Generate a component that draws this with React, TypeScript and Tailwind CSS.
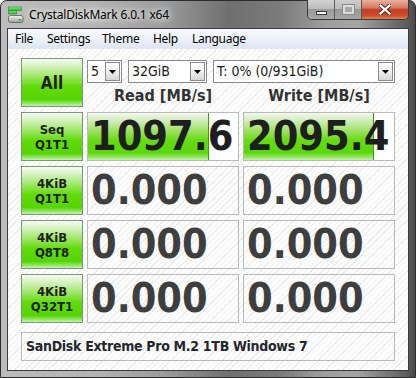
import React from "react";

const hatch =
  "bg-[repeating-linear-gradient(135deg,#ffffff_0px,#ffffff_3px,#ececec_3px,#ececec_4px)]";
const tahoma = "font-['DejaVu_Sans_Condensed','DejaVu_Sans',sans-serif]";
const segoe = "font-['Noto_Sans','Open_Sans',sans-serif]";
const greenBtn =
  "border border-[#7e957e] bg-[linear-gradient(180deg,#f6fcf2_0%,#d4f1be_16%,#97e65a_40%,#62db0c_58%,#54d500_86%,#98e86c_95%,#c8f2b0_100%)]";
const greenBar =
  "bg-[linear-gradient(180deg,#f2f9ee_0%,#cdecb6_18%,#92e050_42%,#66db14_58%,#5ad80a_84%,#95e862_94%,#c4f2a8_100%)]";

function GreenBtn({ l1, l2 }: { l1: string; l2?: string }) {
  return (
    <div
      className={`${greenBtn} h-[49px] flex flex-col items-center justify-center text-[#1f1f1f] font-bold ${tahoma} ${
        l2 ? "text-[13px] leading-[15px]" : "text-[17px] leading-[20px]"
      }`}
    >
      <span>{l1}</span>
      {l2 && <span>{l2}</span>}
    </div>
  );
}

function Combo({ w, text }: { w: string; text: string }) {
  return (
    <div
      className={`${w} h-[23px] border border-[#8a8a8a] bg-white flex items-stretch ${tahoma} text-[14px] text-[#1a1a1a]`}
    >
      <div className="flex-1 flex items-center pl-[3px] overflow-hidden whitespace-nowrap">
        {text}
      </div>
      <div className="my-[1px] mr-[1px] w-[15px] border border-[#8c8c8c] bg-[linear-gradient(180deg,#ffffff_0%,#f0f0f0_50%,#d6d6d6_100%)] flex items-center justify-center">
        <svg width="7" height="4" viewBox="0 0 7 4">
          <path d="M0 0 H7 L3.5 4 Z" fill="#000" />
        </svg>
      </div>
    </div>
  );
}

function Cell({
  value,
  bar,
}: {
  value: string;
  bar?: string;
}) {
  return (
    <div
      className={`relative h-[49px] border border-[#bababa] ${
        bar ? "bg-white" : ""
      } overflow-hidden`}
    >
      {bar && (
        <div
          className={`absolute left-0 top-0 bottom-0 ${greenBar} border-r border-r-[#3c9a1c] ${bar}`}
        />
      )}
      <div
        className={`relative h-full flex items-center pl-[3px] ${tahoma} font-bold text-[41px] leading-none tracking-[0px] ${
          bar ? "text-[#1e1e1e]" : "text-[#3e3e3e]"
        }`}
      >
        {value}
      </div>
    </div>
  );
}

export default function App() {
  return (
    <div className="w-[416px] h-[378px] bg-white overflow-hidden">
      <div className="w-[416px] h-[378px] rounded-t-[7px] border border-[#2c2c2c] bg-[linear-gradient(90deg,#bcbcbc_0%,#b4b4b4_22%,#9a9a9a_40%,#6f6f6f_55%,#7c7c7c_68%,#9e9e9e_78%,#a4a4a4_86%,#5c5c5c_98%,#4a4a4a_100%)] flex flex-col">
        {/* title bar */}
        <div className="h-[27px] flex items-start shrink-0">
          <div className="ml-[7px] mt-[5px]">
            <svg width="16" height="18" viewBox="0 0 16 18">
              <defs>
                <linearGradient id="g1" x1="0" y1="0" x2="0" y2="1">
                  <stop offset="0" stopColor="#8ff08f" />
                  <stop offset="1" stopColor="#21b521" />
                </linearGradient>
                <linearGradient id="g2" x1="0" y1="0" x2="0" y2="1">
                  <stop offset="0" stopColor="#f4f4f4" />
                  <stop offset="1" stopColor="#9c9c9c" />
                </linearGradient>
              </defs>
              <rect x="0.5" y="1" width="13" height="3.5" fill="url(#g1)" stroke="#2a8a2a" strokeWidth="0.6" />
              <rect x="0.5" y="5" width="8" height="3" fill="url(#g1)" stroke="#2a8a2a" strokeWidth="0.6" />
              <rect x="0.5" y="9.5" width="14.5" height="7" rx="2" fill="url(#g2)" stroke="#5c5c5c" strokeWidth="0.8" />
              <rect x="10.5" y="13" width="3" height="1.6" fill="#2ec42e" />
            </svg>
          </div>
          <div
            className={`ml-[5px] mt-[6px] ${segoe} text-[12px] leading-[16px] text-black tracking-[-0.2px] [text-shadow:0_0_6px_#ffffff,0_0_10px_#ffffff]`}
          >
            CrystalDiskMark 6.0.1 x64
          </div>
          <div className="ml-auto mr-[6px] -mt-[1px] flex h-[20px] rounded-b-[5px] border border-t-0 border-[#3a3a3a] overflow-hidden">
            <div className="w-[27px] h-full border-r border-[#5a5a5a] bg-[linear-gradient(180deg,#d2d2d2_0%,#bdbdbd_45%,#9a9a9a_50%,#a8a8a8_100%)] flex items-center justify-center">
              <div className="mt-[6px] w-[11px] h-[4px] bg-white border border-[#3a3a3a]" />
            </div>
            <div className="w-[27px] h-full border-r border-[#5a5a5a] bg-[linear-gradient(180deg,#cfcfcf_0%,#bababa_45%,#989898_50%,#a6a6a6_100%)] flex items-center justify-center">
              <div className="w-[11px] h-[9px] border-[2px] border-[#dcdcdc] bg-[#a8a8a8] outline outline-1 outline-[#8a8a8a]" />
            </div>
            <div className="w-[46px] h-full bg-[linear-gradient(180deg,#eab0a0_0%,#d67a62_40%,#c43c22_52%,#cc4a2c_80%,#e08050_100%)] flex items-center justify-center">
              <svg width="12" height="11" viewBox="0 0 12 11">
                <path d="M1.5 1.5 L10.5 9.5 M10.5 1.5 L1.5 9.5" stroke="#3a2a2a" strokeWidth="4" strokeLinecap="square" />
                <path d="M1.5 1.5 L10.5 9.5 M10.5 1.5 L1.5 9.5" stroke="#ffffff" strokeWidth="2.2" strokeLinecap="square" />
              </svg>
            </div>
          </div>
        </div>

        {/* client */}
        <div className="mx-[6px] mb-[6px] flex-1 border border-[#3c3c3c] flex flex-col bg-white">
          {/* menu */}
          <div
            className={`h-[20px] shrink-0 flex items-center ${segoe} text-[12px] text-black bg-[linear-gradient(180deg,#f7f9fd_0%,#eef2f9_50%,#dfe6f1_100%)] border-b border-[#e2e8f2]`}
          >
            <span className="w-[33px] pl-[7px] tracking-[-0.3px]">File</span>
            <span className="w-[55px] pl-[6px] tracking-[-0.3px]">Settings</span>
            <span className="w-[51px] pl-[6px] tracking-[-0.3px]">Theme</span>
            <span className="w-[39px] pl-[6px] tracking-[-0.3px]">Help</span>
            <span className="pl-[6px] tracking-[-0.3px]">Language</span>
          </div>

          {/* content */}
          <div className={`flex-1 ${hatch} px-[13px] pt-[9px] pb-[8px] flex flex-col`}>
            <div className="grid grid-cols-[62px_152px_152px] gap-x-[4px] gap-y-[5px]">
              <GreenBtn l1="All" />
              <div className="col-span-2 flex flex-col">
                <div className="mt-[2px] flex gap-[6px]">
                  <Combo w="w-[35px]" text="5" />
                  <Combo w="w-[79px]" text="32GiB" />
                  <Combo w="w-[182px]" text="T: 0% (0/931GiB)" />
                </div>
                <div
                  className={`flex-1 grid grid-cols-[152px_152px] gap-x-[4px] ${tahoma} font-bold text-[16px] text-[#333333] items-end pb-[1px]`}
                >
                  <div className="text-center leading-[20px]">Read [MB/s]</div>
                  <div className="text-center leading-[20px]">Write [MB/s]</div>
                </div>
              </div>

              <GreenBtn l1="Seq" l2="Q1T1" />
              <Cell value="1097.6" bar="w-[121px]" />
              <Cell value="2095.4" bar="w-[130px]" />

              <GreenBtn l1="4KiB" l2="Q1T1" />
              <Cell value="0.000" />
              <Cell value="0.000" />

              <GreenBtn l1="4KiB" l2="Q8T8" />
              <Cell value="0.000" />
              <Cell value="0.000" />

              <GreenBtn l1="4KiB" l2="Q32T1" />
              <Cell value="0.000" />
              <Cell value="0.000" />
            </div>
            <div
              className={`mt-[9px] h-[29px] border border-[#bababa] flex items-center pl-[4px] ${tahoma} font-bold text-[14px] tracking-[-0.3px] text-[#24262e]`}
            >
              SanDisk Extreme Pro M.2 1TB Windows 7
            </div>
          </div>
        </div>
      </div>
    </div>
  );
}
